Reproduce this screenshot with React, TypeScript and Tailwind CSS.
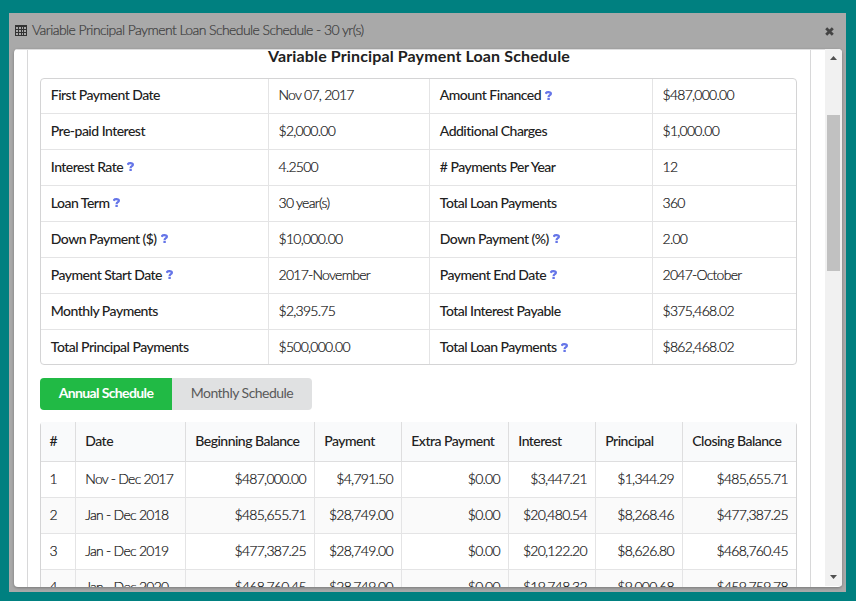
import React from "react";

const summary: [string, boolean, string, string, boolean, string][] = [
  ["First Payment Date", false, "Nov 07, 2017", "Amount Financed", true, "$487,000.00"],
  ["Pre-paid Interest", false, "$2,000.00", "Additional Charges", false, "$1,000.00"],
  ["Interest Rate", true, "4.2500", "# Payments Per Year", false, "12"],
  ["Loan Term", true, "30 year(s)", "Total Loan Payments", false, "360"],
  ["Down Payment ($)", true, "$10,000.00", "Down Payment (%)", true, "2.00"],
  ["Payment Start Date", true, "2017-November", "Payment End Date", true, "2047-October"],
  ["Monthly Payments", false, "$2,395.75", "Total Interest Payable", false, "$375,468.02"],
  ["Total Principal Payments", false, "$500,000.00", "Total Loan Payments", true, "$862,468.02"],
];

const heads = ["#", "Date", "Beginning Balance", "Payment", "Extra Payment", "Interest", "Principal", "Closing Balance"];

const rows = [
  ["1", "Nov - Dec 2017", "$487,000.00", "$4,791.50", "$0.00", "$3,447.21", "$1,344.29", "$485,655.71"],
  ["2", "Jan - Dec 2018", "$485,655.71", "$28,749.00", "$0.00", "$20,480.54", "$8,268.46", "$477,387.25"],
  ["3", "Jan - Dec 2019", "$477,387.25", "$28,749.00", "$0.00", "$20,122.20", "$8,626.80", "$468,760.45"],
  ["4", "Jan - Dec 2020", "$468,760.45", "$28,749.00", "$0.00", "$19,748.32", "$9,000.68", "$459,759.78"],
];

const summaryCols = "grid grid-cols-[228px_161px_223px_143px]";
const scheduleCols = "grid grid-cols-[35px_110px_129px_87px_107px_87px_87px_113px]";
const valueText = "font-light tracking-[-0.74px] text-[#111] [-webkit-text-stroke:0.2px]";

function Question() {
  return (
    <svg className="ml-[4px] h-[9px] w-[7px] shrink-0" viewBox="0 0 7 9">
      <path d="M.5 2.8C1 1.6 1.9 1.1 3.3 1.1C5 1.1 5.9 1.8 5.9 2.8C5.9 4.2 3.6 4.1 3.6 5.9" fill="none" stroke="#6575e8" strokeWidth="2.2" />
      <path d="M2.4 6.8h2.4V9H2.4z" fill="#6575e8" />
    </svg>
  );
}

function Label({ text, help }: { text: string; help: boolean }) {
  return (
    <div className="flex items-center border-r border-[#e4e4e5] pb-[2px] pl-[9.8px] font-medium tracking-[-0.52px]">
      <span>{text}</span>
      {help && <Question />}
    </div>
  );
}

export default function App() {
  return (
    <div className="h-[601px] w-[856px] overflow-hidden bg-[#008080] pt-[13px] pl-[9px] font-['Lato',sans-serif] text-[14px] leading-[18px] text-[#212121]">
      <div className="h-[579px] w-[837px] bg-[#a9a9a9] pr-1 pl-[5px]">
        <header className="flex h-9 items-center justify-between pr-2 pl-px text-[#3c3c3c]">
          <div className="flex items-center">
            <svg className="mb-px h-[11px] w-3" viewBox="0 0 12 11" shapeRendering="crispEdges">
              <rect width="12" height="11" fill="#333" />
              <path fill="#a9a9a9" d="M1 2h2v2H1zM4 2h2v2H4zM7 2h1v2H7zM9 2h2v2H9zM1 5h2v2H1zM4 5h2v2H4zM7 5h1v2H7zM9 5h2v2H9zM1 8h2v2H1zM4 8h2v2H4zM7 8h1v2H7zM9 8h2v2H9z" />
            </svg>
            <span className="ml-[5px] pb-[2px] font-light tracking-[-0.57px] [-webkit-text-stroke:0.2px]">Variable Principal Payment Loan Schedule Schedule - 30 yr(s)</span>
          </div>
          <svg className="h-[9px] w-[9px]" viewBox="0 0 9 9">
            <path d="M1.2 1.2l6.6 6.6M7.8 1.2L1.2 7.8" stroke="#444" strokeWidth="2.8" />
          </svg>
        </header>
        <div className="flex h-[538px] overflow-hidden rounded-[4px] bg-white shadow-[0_1px_3px_#777]">
          <main className="h-full w-[811px] shrink-0 border-t border-[#dededf] pl-[13px]">
            <div className="h-full w-[784px] border-x border-[#d8d8d9] px-3">
              <h1 className="h-7 text-center text-[16px] leading-[12px] font-bold tracking-[0.13px]">Variable Principal Payment Loan Schedule</h1>
              <section className="h-[287px] w-[757px] overflow-hidden rounded-[4px] border border-[#d4d4d5]">
                {summary.map(([a, ah, b, c, ch, d], i) => (
                  <div key={a} className={`${summaryCols} ${i === 0 ? "h-[35px]" : "h-9"} ${i < 7 ? "border-b border-[#e4e4e5]" : ""}`}>
                    <Label text={a} help={ah} />
                    <div className={`flex items-center border-r border-[#e4e4e5] pb-[2px] pl-[9.5px] ${valueText}`}>{b}</div>
                    <Label text={c} help={ch} />
                    <div className={`flex items-center pb-[2px] pl-[9.5px] ${valueText}`}>{d}</div>
                  </div>
                ))}
              </section>
              <div className="mt-[13px] flex h-8">
                <button className="w-[132px] rounded-l-[4px] bg-[#21ba45] pb-[2px] font-bold tracking-[-0.63px] text-white">Annual Schedule</button>
                <button className="w-[140px] rounded-r-[4px] bg-[#e0e1e2] pb-[2px] tracking-[-0.52px] text-[#5a5a5a]">Monthly Schedule</button>
              </div>
              <section className="mt-3 w-[757px] rounded-t-[4px] border-x border-[#d4d4d5] bg-white">
                <div className={`${scheduleCols} h-10 border-b border-[#dededf] bg-[#f9fafb] font-medium tracking-[-0.52px]`}>
                  {heads.map((h, i) => (
                    <div key={h} className={`flex items-center pb-[2px] ${i === 0 ? "pl-[8.5px]" : "pl-[9.3px]"} ${i < 7 ? "border-r border-[#dededf]" : ""}`}>{h}</div>
                  ))}
                </div>
                {rows.map((r, ri) => (
                  <div key={r[0]} className={`${scheduleCols} h-9 border-b border-[#e4e4e5] ${valueText} ${ri % 2 ? "bg-[#fafafa]" : ""}`}>
                    {r.map((c, i) => (
                      <div key={i} className={`flex items-center pb-[2px] ${i === 0 ? "pl-[8.5px]" : i === 1 ? "pl-[9.3px]" : "justify-end pr-[8.2px]"} ${i < 7 ? "border-r border-[#e4e4e5]" : ""}`}>{c}</div>
                    ))}
                  </div>
                ))}
              </section>
            </div>
          </main>
          <aside className="flex h-[537px] w-[17px] flex-col items-center bg-[#f1f1f1]">
            <svg className="mt-[7px] h-1 w-[7px]" viewBox="0 0 7 4"><path d="M0 4L3.5 0L7 4z" fill="#505050" /></svg>
            <div className="mt-[55px] h-[156px] w-[13px] bg-[#c1c1c1]" />
            <svg className="mt-auto mb-[7px] h-1 w-[7px]" viewBox="0 0 7 4"><path d="M0 0L3.5 4L7 0z" fill="#505050" /></svg>
          </aside>
        </div>
      </div>
    </div>
  );
}
